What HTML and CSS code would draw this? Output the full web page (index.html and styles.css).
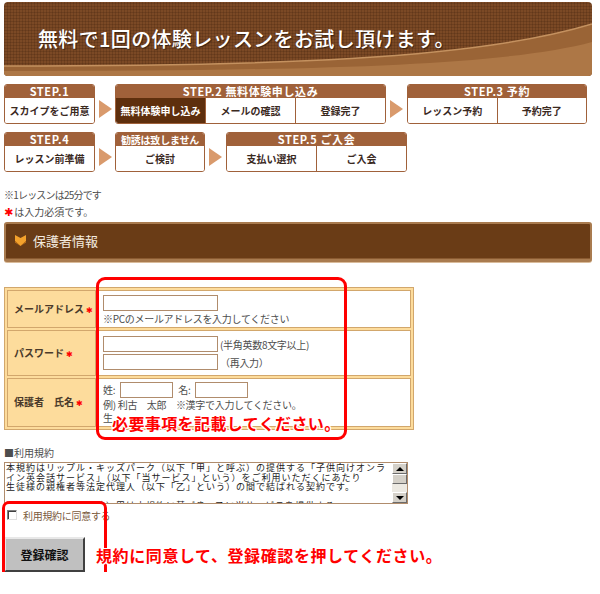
FILE: index.html
```html
<!DOCTYPE html>
<html lang="ja">
<head>
  <meta charset="UTF-8">
  <meta name="viewport" content="width=device-width, initial-scale=1.0">
  <title>無料体験申し込み</title>
  <link rel="stylesheet" href="styles.css">
</head>
<body>
  <div class="page">

    <div class="banner">
      <svg class="banner-curve" viewBox="0 0 588 74" preserveAspectRatio="none">
        <path d="M0 64 C 260 64 470 58 588 22 L588 74 L0 74 Z" fill="#9a6436"/>
        <path d="M0 64 C 260 64 470 58 588 22" fill="none" stroke="#c4915f" stroke-width="1.5"/>
        <path d="M0 69 C 300 69 500 64 588 40 L588 74 L0 74 Z" fill="#ad7746"/>
      </svg>
      <h1 class="banner-title">無料で1回の体験レッスンをお試し頂けます。</h1>
    </div>

    <div class="flow">
      <div class="flow-row">
        <div class="step w91">
          <div class="step-head">STEP.1</div>
          <div class="step-body"><span class="step-cell">スカイプをご用意</span></div>
        </div>
        <span class="flow-arrow"></span>
        <div class="step w271">
          <div class="step-head">STEP.2 無料体験申し込み</div>
          <div class="step-body">
            <span class="step-cell current">無料体験申し込み</span>
            <span class="step-cell">メールの確認</span>
            <span class="step-cell">登録完了</span>
          </div>
        </div>
        <span class="flow-arrow wide"></span>
        <div class="step w180">
          <div class="step-head">STEP.3 予約</div>
          <div class="step-body">
            <span class="step-cell">レッスン予約</span>
            <span class="step-cell">予約完了</span>
          </div>
        </div>
      </div>
      <div class="flow-row">
        <div class="step w91">
          <div class="step-head">STEP.4</div>
          <div class="step-body"><span class="step-cell">レッスン前準備</span></div>
        </div>
        <span class="flow-arrow"></span>
        <div class="step w90">
          <div class="step-head small">勧誘は致しません</div>
          <div class="step-body"><span class="step-cell">ご検討</span></div>
        </div>
        <span class="flow-arrow wide"></span>
        <div class="step w181">
          <div class="step-head">STEP.5 ご入会</div>
          <div class="step-body">
            <span class="step-cell">支払い選択</span>
            <span class="step-cell">ご入会</span>
          </div>
        </div>
      </div>
    </div>

    <p class="note first">※1レッスンは25分です</p>
    <p class="note"><span class="req big">✱</span>は入力必須です。</p>

    <h2 class="section-head">
      <svg class="section-icon" viewBox="0 0 11 11">
        <path d="M0 0 L5.5 3 L11 0 L11 6 L5.5 11 L0 6 Z" fill="#f3a12c"/>
        <path d="M0 6 L5.5 11 L11 6 L11 7.5 L5.5 11 L0 7.5 Z" fill="#c9781a"/>
      </svg>
      保護者情報
    </h2>

    <table class="entry">
      <tr class="row-mail">
        <th>メールアドレス<span class="req">✱</span></th>
        <td>
          <input type="text" class="field solo">
          <div class="hint">※PCのメールアドレスを入力してください</div>
        </td>
      </tr>
      <tr class="row-pass">
        <th>パスワード<span class="req">✱</span></th>
        <td>
          <div class="line"><input type="password" class="field"><span class="hint">(半角英数8文字以上)</span></div>
          <div class="line"><input type="password" class="field"><span class="hint">（再入力）</span></div>
        </td>
      </tr>
      <tr class="row-name">
        <th>保護者　氏名<span class="req">✱</span></th>
        <td>
          <div class="line name-line">
            <span class="hint">姓:</span><input type="text" class="field short">
            <span class="hint">名:</span><input type="text" class="field short">
          </div>
          <div class="hint">例) 利古　太郎　※漢字で入力してください。</div>
          <div class="hint">生</div>
        </td>
      </tr>
    </table>

    <p class="terms-title">■利用規約</p>
    <div class="terms-box">
      <textarea class="terms-text" readonly>本規約はリップル・キッズパーク（以下「甲」と呼ぶ）の提供する「子供向けオンライン英会話サービス」（以下「当サービス」という）をご利用いただくにあたり
生徒様の親権者等法定代理人（以下「乙」という）の間で結ばれる契約です。

第１条（本規約の目的）甲は本規約に基づき、乙に当サービスを提供する。</textarea>
      <div class="scrollbar">
        <span class="sb-btn up"></span>
        <span class="sb-thumb"></span>
        <span class="sb-track"></span>
        <span class="sb-btn down"></span>
      </div>
    </div>

    <label class="agree"><input type="checkbox" class="agree-box">利用規約に同意する</label>

    <div class="submit-row">
      <button type="button" class="submit-btn">登録確認</button>
      <span class="callout">規約に同意して、登録確認を押してください。</span>
    </div>

    <!-- 説明用の赤枠 -->
    <div class="mark mark-form"></div>
    <div class="mark mark-submit"></div>
    <div class="callout callout-form">必要事項を記載してください。</div>

  </div>
</body>
</html>
```

FILE: styles.css
```css
:root {
  --brown: #a0613a;
  --brown-dark: #5e2f0d;
  --arrow: #d99a6c;
  --tan: #d2a76c;
  --label-bg: #fddc9c;
  --text: #4d4d4d;
  --red: #ff0000;
}

* {
  box-sizing: border-box;
}

body {
  margin: 0;
  padding: 0;
  font-family: "Noto Sans CJK JP", "Noto Sans", sans-serif;
  color: var(--text);
  background: #ffffff;
}

.page {
  position: relative;
  width: 600px;
  padding: 2px 8px 0 4px;
}

/* ヘッダー画像 */
.banner {
  position: relative;
  height: 74px;
  border-radius: 4px;
  overflow: hidden;
  background-color: #7b4925;
  background-image:
    repeating-linear-gradient(0deg, rgba(60, 30, 10, 0.22) 0 1px, transparent 1px 3px),
    repeating-linear-gradient(90deg, rgba(60, 30, 10, 0.22) 0 1px, transparent 1px 3px);
  display: flex;
  align-items: center;
}

.banner-curve {
  position: absolute;
  left: 0;
  top: 0;
  width: 100%;
  height: 100%;
}

.banner-title {
  position: relative;
  margin: 0 0 2px 0;
  padding-left: 34px;
  font-size: 20px;
  font-weight: 500;
  color: #ffffff;
  letter-spacing: 0.35px;
  text-shadow: 1px 1px 1px rgba(0, 0, 0, 0.5);
}

/* ステップ */
.flow {
  margin-top: 8px;
  display: flex;
  flex-direction: column;
  gap: 8px;
}

.flow-row {
  display: flex;
  align-items: flex-start;
}

.step {
  border: 1px solid var(--brown);
  border-radius: 3px;
  overflow: hidden;
  display: flex;
  flex-direction: column;
}

.w90 { width: 90px; }
.w91 { width: 91px; }
.w180 { width: 180px; }
.w181 { width: 181px; }
.w271 { width: 271px; }

.step-head {
  background: var(--brown);
  color: #ffffff;
  height: 13px;
  line-height: 13px;
  font-size: 11px;
  font-weight: 700;
  text-align: center;
  letter-spacing: 0.6px;
  white-space: nowrap;
}

.step-head.small {
  font-size: 10px;
  letter-spacing: -0.2px;
}

.step-body {
  display: flex;
  height: 25px;
  background: #ffffff;
}

.step-cell {
  flex: 1;
  text-align: center;
  line-height: 25px;
  font-size: 10px;
  font-weight: 700;
  color: #3b2a1f;
  white-space: nowrap;
}

.step-cell + .step-cell {
  border-left: 1px solid var(--brown);
}

.step-cell.current {
  background: var(--brown-dark);
  color: #ffffff;
}

.flow-arrow {
  width: 20px;
  display: flex;
  justify-content: center;
  margin-top: 16px;
}

.flow-arrow.wide {
  width: 21px;
}

.flow-arrow::before {
  content: '';
  border-left: 13px solid var(--arrow);
  border-top: 9px solid transparent;
  border-bottom: 9px solid transparent;
}

/* 注意書き */
.note {
  margin: 0;
  font-size: 10px;
  line-height: 17px;
  color: var(--text);
}

.note.first {
  margin-top: 14px;
  letter-spacing: -0.8px;
}

.req {
  color: var(--red);
  font-family: "DejaVu Sans", sans-serif;
  font-size: 8px;
  margin-left: 2px;
}

.req.big {
  font-size: 11px;
  margin: 0 1px 0 0;
}

/* 見出し */
.section-head {
  margin: 1px 0 0 0;
  height: 40px;
  display: flex;
  align-items: center;
  gap: 7px;
  padding: 0 0 2px 9px;
  background: #6a3c16;
  border: 2px solid #a97b4f;
  border-bottom: 3px solid #a97b4f;
  border-radius: 3px;
  box-shadow: inset 0 -1px 0 #8a5a30, 0 1px 0 #d9bb9a;
  font-size: 13px;
  font-weight: 400;
  color: #f4ece0;
}

.section-icon {
  width: 11px;
  height: 11px;
}

/* 入力フォーム */
.entry {
  margin-top: 25px;
  width: 410px;
  border: 1px solid var(--tan);
  border-spacing: 2px;
  background: var(--label-bg);
  font-size: 10px;
  line-height: 13px;
}

.entry th,
.entry td {
  border: 1px solid var(--tan);
  padding: 0;
}

.entry th {
  width: 89px;
  padding-left: 6px;
  text-align: left;
  font-size: 10px;
  font-weight: 700;
  color: #4a3a2a;
  white-space: nowrap;
}

.entry td {
  background: #ffffff;
  padding: 0 4px;
}

.row-mail td { height: 38px; }
.row-pass td { height: 46px; }
.row-name td { height: 49px; }

.line {
  display: flex;
  align-items: center;
  gap: 2px;
}

.line + .line {
  margin-top: 2px;
}

.name-line {
  gap: 5px;
}

.field {
  width: 115px;
  height: 16px;
  margin: 0;
  padding: 0;
  border: 1px solid #b08c6c;
  background: #ffffff;
  font-size: 10px;
}

.field.solo {
  display: block;
  margin: 2px 0 1px 0;
}

.field.short {
  width: 53px;
}

.hint {
  font-size: 10px;
  line-height: 13px;
  color: var(--text);
  letter-spacing: -0.3px;
  white-space: nowrap;
}

/* 利用規約 */
.terms-title {
  margin: 16px 0 0 0;
  font-size: 10px;
  line-height: 14px;
  color: var(--text);
}

.terms-box {
  margin-top: 2px;
  width: 404px;
  height: 42px;
  display: flex;
  border: 1px solid #b08c6c;
  background: #ffffff;
}

.terms-text {
  flex: 1;
  border: none;
  margin: 0;
  padding: 0 0 0 1px;
  resize: none;
  overflow: hidden;
  font-family: "Noto Sans CJK JP", sans-serif;
  font-size: 9px;
  letter-spacing: 1px;
  line-height: 9.5px;
  color: #222222;
  outline: none;
}

.scrollbar {
  width: 15px;
  display: flex;
  flex-direction: column;
  background: #ece9e2;
}

.sb-btn,
.sb-thumb {
  height: 11px;
  background: #d4d0c8;
  border: 1px solid;
  border-color: #ffffff #6b6b6b #6b6b6b #ffffff;
  display: flex;
  justify-content: center;
  align-items: center;
}

.sb-thumb {
  height: 10px;
}

.sb-track {
  flex: 1;
}

.sb-btn.up::before {
  content: '';
  border-bottom: 4px solid #000000;
  border-left: 4px solid transparent;
  border-right: 4px solid transparent;
}

.sb-btn.down::before {
  content: '';
  border-top: 4px solid #000000;
  border-left: 4px solid transparent;
  border-right: 4px solid transparent;
}

.agree {
  margin-top: 4px;
  display: flex;
  align-items: center;
  height: 14px;
  gap: 6px;
  padding-left: 3px;
  font-size: 10px;
  color: #7a5a3c;
  letter-spacing: -0.3px;
}

.agree-box {
  appearance: none;
  margin: 0;
  width: 10px;
  height: 10px;
  border: 1px solid;
  border-color: #808080 #e0e0e0 #e0e0e0 #808080;
  background: #ffffff;
  box-shadow: inset 1px 1px 0 #404040;
}

.submit-row {
  margin-top: 15px;
  display: flex;
  align-items: center;
}

.submit-btn {
  width: 81px;
  height: 35px;
  margin: 0;
  padding: 0;
  background: #c0c0c0;
  border: 2px solid;
  border-color: #e8e8e8 #404040 #404040 #e8e8e8;
  font-family: "Noto Sans CJK JP", sans-serif;
  font-size: 12px;
  font-weight: 700;
  color: #111111;
}

/* 赤い注釈 */
.callout {
  position: relative;
  z-index: 2;
  margin-left: 11px;
  font-size: 16px;
  font-weight: 700;
  color: var(--red);
  letter-spacing: 0.6px;
  white-space: nowrap;
  text-shadow:
    1px 0 0 #fff, -1px 0 0 #fff, 0 1px 0 #fff, 0 -1px 0 #fff,
    1px 1px 0 #fff, -1px -1px 0 #fff, 1px -1px 0 #fff, -1px 1px 0 #fff;
}

.callout-form {
  position: absolute;
  left: 112px;
  top: 411px;
  margin: 0;
  letter-spacing: 0.4px;
}

.mark {
  position: absolute;
  border: 3px solid var(--red);
  border-radius: 9px;
  z-index: 1;
}

.mark-form {
  left: 96px;
  top: 277px;
  width: 251px;
  height: 163px;
}

.mark-submit {
  left: 2px;
  top: 501px;
  width: 105px;
  height: 86px;
  border-radius: 7px;
}
```
